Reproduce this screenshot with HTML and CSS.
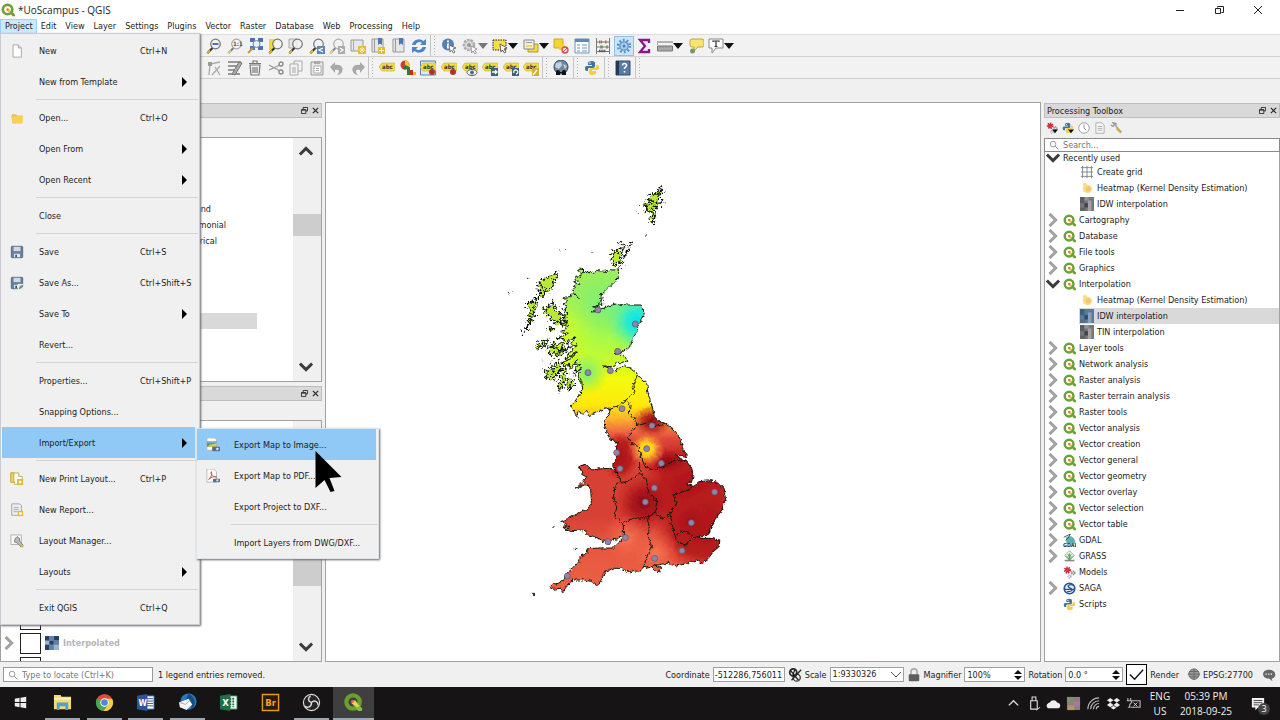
FILE: index.html
```html
<!DOCTYPE html>
<html lang="en">
<head>
<meta charset="utf-8">
<title>*UoScampus - QGIS</title>
<link rel="stylesheet" href="styles.css">
</head>
<body>
<svg class="sprite" aria-hidden="true">
  <symbol id="q" viewBox="0 0 16 16"><circle cx="7.5" cy="7.5" r="5.4" fill="#fff" stroke="#6f9f3a" stroke-width="3"/><path d="M9 9h3l4 4v2h-3z" fill="#6f9f3a"/><path d="M6.200 6.200h3l2 3-2 2-3-3z" fill="#e8c54a"/><circle cx="7.500" cy="7.500" r="1.200" fill="#d8663c"/></symbol>
  <symbol id="page" viewBox="0 0 16 16"><path d="M3.500 1h6l3.500 3.500V15h-9.500z" fill="#fff" stroke="#a0a0a0"/><path d="M9.500 1v3.500H13" fill="#ddd" stroke="#a0a0a0"/></symbol>
  <symbol id="folder" viewBox="0 0 16 16"><path d="M2 4h5l1 1.500h6V14H3z" fill="#d9aa33"/><path d="M1 6l2-1h12l-1 9H3z" fill="#f6d154"/></symbol>
  <symbol id="save" viewBox="0 0 16 16"><rect x="1.500" y="1.500" width="13" height="13" rx="1" fill="#667f9f" stroke="#4f6582"/><path d="M4 2h8v5H4z" fill="#cfd8e3"/><path d="M4.500 10h7v4h-7z" fill="#e6e6e6"/><path d="M6 11h2v3H6z" fill="#3e5470"/></symbol>
  <symbol id="saveas" viewBox="0 0 16 16"><use href="#save"/><path d="M9 9h7v7H9z" fill="#e9ede6"/><path d="M10 15l1-3 3-2 1.500 1.500L13 14z" fill="#6b9273"/></symbol>
  <symbol id="layout" viewBox="0 0 16 16"><path d="M1 1h9v4h4v9H5V11H1z" fill="#fff" stroke="#c9a83e"/><path d="M1 1h3.500v11H1z" fill="#edd266" stroke="#c9a83e"/><path d="M8 8h7v7H8z" fill="#ddb93c"/><path d="M10 10h3v3h-3z" fill="#fffbe0"/></symbol>
  <symbol id="report" viewBox="0 0 16 16"><path d="M2 1h9l2 2v11H2z" fill="#f2f2f2" stroke="#999"/><path d="M4 5h6M4 7.500h6M4 10h5" stroke="#8aa0b8"/><path d="M9 9h6v6H9z" fill="#ddb93c"/><path d="M10.500 10.500h3v3h-3z" fill="#fffbe0"/></symbol>
  <symbol id="manager" viewBox="0 0 16 16"><path d="M1 1h12v11H1z" fill="#fafafa" stroke="#aaa"/><path d="M6 5l2-2 3 2v3l4 5-2 2-5-5-3-1z" fill="#b9b9b9" stroke="#777"/><path d="M12 12l3 3" stroke="#d5b845" stroke-width="2"/></symbol>
  <symbol id="img" viewBox="0 0 16 16"><path d="M1 0h9l2 2v12H1z" fill="#fff" stroke="#b5b5b5"/><path d="M1 4h11v6H1z" fill="#5c9660"/><path d="M1 4h11v2H1z" fill="#77add0"/><path d="M3 8l9-2v4H3z" fill="#d8c864"/><rect x="7" y="10" width="9" height="5" rx="1" fill="#536f8f"/><circle cx="13" cy="12.500" r="1.500" fill="#d7e3ef"/></symbol>
  <symbol id="pdf" viewBox="0 0 16 16"><path d="M1 0h8l3 3v12H1z" fill="#fff" stroke="#b5b5b5"/><path d="M3 12c4-4 4-7 3-9-2 3 4 7 6 6-3-1-7 1-9 3z" fill="none" stroke="#c94036"/><rect x="8" y="11" width="8" height="4" rx="1" fill="#536f8f"/><circle cx="13" cy="13" r="1.300" fill="#d7e3ef"/></symbol>
  <symbol id="lens" viewBox="0 0 16 16"><path d="M1.500 15l5-5" stroke="#333" stroke-width="2.200"/><path d="M1 15.500l3-3" stroke="#d9ac3a" stroke-width="2.200"/><circle cx="9.500" cy="6" r="4.800" fill="#f3f3f3" fill-opacity=".8" stroke="#777" stroke-width="1.200"/></symbol>
  <symbol id="zout" viewBox="0 0 16 16"><use href="#lens"/><path d="M6.500 6h6" stroke="#4674b5" stroke-width="2"/></symbol>
  <symbol id="znat" viewBox="0 0 16 16"><g opacity=".6"><use href="#lens"/></g><text x="6" y="8.300" font-size="6" font-weight="bold" fill="#555">1:1</text></symbol>
  <symbol id="zfull" viewBox="0 0 16 16"><path d="M3 0h5v4H3zM11 0h5v4h-5zM11 8h5v4h-5zM3 8h5v4H3z" fill="#4c72ae"/><circle cx="9.500" cy="6" r="3.500" fill="#e8eef6" stroke="#7088a8"/><path d="M1 15l5-5" stroke="#c79b30" stroke-width="2"/></symbol>
  <symbol id="zsel" viewBox="0 0 16 16"><path d="M1 1h6v11H1z" fill="#f4d83b"/><use href="#lens"/></symbol>
  <symbol id="zlay" viewBox="0 0 16 16"><path d="M1 1h8v9H1z" fill="#e5e5e5" stroke="#aaa"/><use href="#lens"/></symbol>
  <symbol id="zlast" viewBox="0 0 16 16"><use href="#lens"/><path d="M8 8h8v8H8z" fill="#5d86b7"/><path d="M14 10l-4 2 4 2" fill="none" stroke="#fff" stroke-width="1.300"/></symbol>
  <symbol id="znext" viewBox="0 0 16 16"><g opacity=".55"><use href="#lens"/></g><path d="M9 8h7v8H9z" fill="#aaa"/><path d="M11 10l3 2-3 2" fill="none" stroke="#fff" stroke-width="1.300"/></symbol>
  <symbol id="mapnew" viewBox="0 0 16 16"><path d="M1 2h12v11H1z" fill="#e7e7e7" stroke="#999"/><path d="M3.500 2v11" stroke="#aaa"/><path d="M8 8h8v8H8z" fill="#dfbc3b"/><path d="M12 9v6M9 12h6M10 10l4 4M14 10l-4 4" stroke="#fff7c4" stroke-width=".9"/></symbol>
  <symbol id="bm" viewBox="0 0 16 16"><path d="M2 1h11v13H2z" fill="#e7e7e7" stroke="#999"/><path d="M4.500 1v13" stroke="#999"/><path d="M8 0h4v7L10 5.500 8 7z" fill="#4c77b2"/></symbol>
  <symbol id="bmnew" viewBox="0 0 16 16"><use href="#bm"/><path d="M8 9h7v7H8z" fill="#dfbc3b"/><path d="M11.500 10v5M9 12.500h5" stroke="#fff7c4"/></symbol>
  <symbol id="refresh" viewBox="0 0 16 16"><path d="M1 7a7 7 0 0 1 11.500-4L15 1v6H9l2-2a4 4 0 0 0-6.500 2zM15 9a7 7 0 0 1-11.500 4L1 15V9h6l-2 2a4 4 0 0 0 6.500-2z" fill="#4d86c6"/></symbol>
  <symbol id="info" viewBox="0 0 16 16"><circle cx="7" cy="6.500" r="6" fill="#5581b6"/><path d="M7 5.500v5M7 2.500v1.700" stroke="#fff" stroke-width="2"/><path d="M8 7l7 3-3 1 2 3-1.500 1-2-3-1.500 2z" fill="#fff" stroke="#555" stroke-width=".8"/></symbol>
  <symbol id="action" viewBox="0 0 16 16"><circle cx="7" cy="7" r="5" fill="#ddd" stroke="#aaa" stroke-width="2.500" stroke-dasharray="2.500 1"/><circle cx="7" cy="7" r="2" fill="#999"/><path d="M9 8l6 3-2.500 1 2 3-1.500 1-2-3-1.500 2z" fill="#fff" stroke="#888" stroke-width=".8"/></symbol>
  <symbol id="select" viewBox="0 0 16 16"><path d="M1 2h13v10H1z" fill="#f4dc4b" stroke="#222" stroke-dasharray="1.500 1"/><path d="M8 6l7 4-3 1 2 3-1.500 1-2-3-1.500 2z" fill="#fff" stroke="#444" stroke-width=".8"/></symbol>
  <symbol id="selform" viewBox="0 0 16 16"><path d="M5 6h10v8H5z" fill="#f3d847" stroke="#b59930"/><path d="M1 2h10v9H1z" fill="#eee" stroke="#888"/><path d="M3 4.500h6" stroke="#999"/><path d="M3 7h6v2H3z" fill="#f3d847"/></symbol>
  <symbol id="desel" viewBox="0 0 16 16"><path d="M1 1h9v9H1z" fill="#f3d530" stroke="#caaa28"/><path d="M6 7h6v5H6z" fill="#f3d530"/><circle cx="12" cy="12" r="3" fill="#fbdede" stroke="#d14c48" stroke-width="1.300"/><path d="M10 14l4-4" stroke="#d14c48"/></symbol>
  <symbol id="attr" viewBox="0 0 16 16"><path d="M1 1h14v14H1z" fill="#fafcff" stroke="#6f91bb"/><path d="M1 2.500h14" stroke="#5f87b8" stroke-width="3"/><path d="M3 7h3M8 7h5M3 10h3M8 10h5M3 13h3M8 13h5" stroke="#7294ba"/></symbol>
  <symbol id="abacus" viewBox="0 0 16 16"><path d="M1.500 0v16M14.500 0v16M1 4h14M1 9h14M1 13.500h14" stroke="#777" fill="none"/><path d="M4 4h3M10 4h2" stroke="#d45b4e" stroke-width="3.200" stroke-dasharray="1.400 .5"/><path d="M5 9h3M11 9h2" stroke="#6f9b6c" stroke-width="3.200"/><path d="M4 13h7" stroke="#555" stroke-width="2.600" stroke-dasharray="1.500 .7"/></symbol>
  <symbol id="gear" viewBox="0 0 16 16"><circle cx="8" cy="8" r="6" fill="none" stroke="#5c90c6" stroke-width="2.500" stroke-dasharray="1.800 1.970"/><circle cx="8" cy="8" r="4.200" fill="#a8cdf0" stroke="#5c90c6" stroke-width="1.300"/><circle cx="8" cy="8" r="1.500" fill="#4b82bd"/></symbol>
  <symbol id="sigma" viewBox="0 0 16 16"><path d="M13 5V2H4l5 6-5 6h9v-3" fill="none" stroke="#8b168b" stroke-width="2.300"/></symbol>
  <symbol id="ruler" viewBox="0 0 16 16"><path d="M0 4h16M0 5v2" stroke="#777" stroke-width="1.200"/><path d="M.500 8h15v5H.500z" fill="#aaa" stroke="#777"/><path d="M3 8v2M6 8v2M9 8v2M12 8v2" stroke="#888"/></symbol>
  <symbol id="tip" viewBox="0 0 16 16"><path d="M4 1h10q2 0 2 2v4q0 2-2 2h-4l-4 4V9H4Q2 9 2 7V3q0-2 2-2z" fill="#f5e373" stroke="#c1a638"/><circle cx="4.500" cy="13" r="2.500" fill="#789767"/></symbol>
  <symbol id="textann" viewBox="0 0 16 16"><path d="M1 1h14v9H8l-4 5v-5H1z" fill="#fbfbfb" stroke="#888"/><path d="M5 4V3h6v1M8 3v5.500M6.500 8.500h3" stroke="#333" stroke-width="1.200" fill="none"/></symbol>
  <symbol id="vertex" viewBox="0 0 16 16"><path d="M3 15L4 4l10-2M6 15L14 6M9 7l5 8" stroke="#aaa" stroke-width="1.300" fill="none"/><path d="M2 2h4v4H2z" fill="#999"/></symbol>
  <symbol id="multied" viewBox="0 0 16 16"><path d="M1 2h13M1 6h11M1 10h9M1 14h12" stroke="#999" stroke-width="2"/><path d="M5 14L12 2l3 1-7 12z" fill="#aaa" stroke="#777"/></symbol>
  <symbol id="trash" viewBox="0 0 16 16"><path d="M3 5h10l-1 10H4zM2 3.500h12M6 3V1h4v2M6 7v6M8 7v6M10 7v6" fill="none" stroke="#777" stroke-width="1.200"/></symbol>
  <symbol id="cut" viewBox="0 0 16 16"><path d="M1 5l11 6M1 10l11-5" stroke="#999" stroke-width="1.300"/><circle cx="13" cy="4" r="2" fill="none" stroke="#888" stroke-width="1.300"/><circle cx="13" cy="12" r="2" fill="none" stroke="#888" stroke-width="1.300"/></symbol>
  <symbol id="copy" viewBox="0 0 16 16"><path d="M6 1h8v10H6z" fill="#f2f2f2" stroke="#aaa"/><path d="M2 4h8v11H2z" fill="#f2f2f2" stroke="#aaa"/><path d="M4 8h4M4 10h4M4 12h4" stroke="#aaa"/></symbol>
  <symbol id="paste" viewBox="0 0 16 16"><path d="M2 2h12v13H2z" fill="#e8e8e8" stroke="#999"/><path d="M5 1h6v3H5z" fill="#aaa"/><path d="M5 6h7v7H5z" fill="#fff" stroke="#aaa"/><path d="M7 8.500h3M7 10.500h3" stroke="#aaa"/></symbol>
  <symbol id="undo" viewBox="0 0 16 16"><path d="M1 7l5-5v3c6-1 9 3 7 7-1 2-3 3-5 3 3-3 3-6-2-5v3z" fill="#a9a9a9"/></symbol>
  <symbol id="redo" viewBox="0 0 16 16"><path d="M15 7l-5-5v3C4 4 1 8 3 12c1 2 3 3 5 3-3-3-3-6 2-5v3z" fill="#a9a9a9"/></symbol>
  <symbol id="tag" viewBox="0 0 16 16"><path d="M0 7l3-4h12q1 0 1 1v6q0 1-1 1H3z" fill="#f0dc46" stroke="#c5ae38" stroke-width=".6"/><text x="3" y="9" font-size="6" font-weight="bold" fill="#333">abc</text></symbol>
  <symbol id="diagram" viewBox="0 0 16 16"><circle cx="5" cy="5" r="4.500" fill="#d13a31"/><path d="M5 5V.500A4.500 4.500 0 0 1 9 7z" fill="#f0c63a"/><path d="M5 5l4 2a4.500 4.500 0 0 1-6 2z" fill="#2f7b38"/><path d="M7 7h3v8H7z" fill="#238138"/><path d="M10 10h3v5h-3z" fill="#c62828"/><path d="M13 12h3v3h-3z" fill="#e4bb30"/></symbol>
  <symbol id="tagpin" viewBox="0 0 16 16"><use href="#tag"/><circle cx="12" cy="12" r="3" fill="#ba2d2d"/></symbol>
  <symbol id="taghi" viewBox="0 0 16 16"><path d="M.500 1h15v14H.500z" fill="#dcebf8" stroke="#4e82b9"/><use href="#tagpin"/></symbol>
  <symbol id="tageye" viewBox="0 0 16 16"><use href="#tag"/><ellipse cx="10" cy="12.500" rx="5" ry="3" fill="#fff" stroke="#555"/><circle cx="10" cy="12.500" r="2" fill="#426b9b"/></symbol>
  <symbol id="tagmove" viewBox="0 0 16 16"><use href="#tag"/><path d="M9 8h7v8H9z" fill="#3f6079"/><path d="M10 12h5M13 10l2 2-2 2" stroke="#fff" fill="none" stroke-width="1.300"/></symbol>
  <symbol id="tagrot" viewBox="0 0 16 16"><use href="#tag"/><path d="M9 8h7v8H9z" fill="#3f6079"/><path d="M11 13a2 2 0 1 1 2 1" stroke="#fff" fill="none" stroke-width="1.300"/></symbol>
  <symbol id="taged" viewBox="0 0 16 16"><use href="#tag"/><path d="M9 8h7v8H9z" fill="#d3ae32"/><path d="M10 15l4-5" stroke="#fff" stroke-width="1.500"/></symbol>
  <symbol id="globe" viewBox="0 0 16 16"><circle cx="8" cy="7" r="7" fill="#6e8aa5" stroke="#34495e"/><path d="M3 3l5-1 1 3-3 4-4-2zM10 4l4 2-2 3z" fill="#c5d2dc"/><path d="M3 15V12q0-2 2-2t2 2h2q0-2 2-2t2 2v3h-4v-2H7v2z" fill="#111"/></symbol>
  <symbol id="python" viewBox="0 0 16 16"><path d="M8 1c-3 0-4 1-4 2v2h4v1H3C1 6 1 7 1 8.500S1.500 11 3 11h1V9q0-1 1-1h4q2 0 2-2V3c0-1-1-2-3-2z" fill="#3f73a4"/><path d="M8 15c3 0 4-1 4-2v-2H8v-1h5c2 0 2-1 2-2.500S14.500 5 13 5h-1v2q0 1-1 1H7q-2 0-2 2v3c0 1 1 2 3 2z" fill="#f3cd45"/><circle cx="6" cy="3" r=".8" fill="#fff"/></symbol>
  <symbol id="help" viewBox="0 0 16 16"><path d="M1 1h14v14H1z" fill="#587ba5" stroke="#344e70"/><path d="M1 1h3v14H1z" fill="#263950"/><path d="M7.500 5.500q0-2 2-2t2 2q0 1-2 2.500v1M9.500 11v1.500" fill="none" stroke="#fff" stroke-width="1.500"/></symbol>
  <symbol id="cogs" viewBox="0 0 16 16"><circle cx="5.500" cy="5" r="3" fill="#d43c45" stroke="#c52837" stroke-width="3" stroke-dasharray="1.500 1"/><circle cx="12.500" cy="8.500" r="2" fill="#ddd" stroke="#8b8585" stroke-width="2" stroke-dasharray="1.300 .7"/><circle cx="8" cy="13" r="1.700" fill="#fff" stroke="#a6addd" stroke-width="2" stroke-dasharray="1.300 .7"/></symbol>
  <symbol id="drop" viewBox="0 0 16 16"><path d="M8 10h8l-4 5z" fill="#111"/></symbol>
  <symbol id="clock" viewBox="0 0 16 16"><circle cx="8" cy="8" r="7" fill="#fff" stroke="#888"/><path d="M8 3v5l3 3" fill="none" stroke="#777"/></symbol>
  <symbol id="doc" viewBox="0 0 16 16"><path d="M2.500 1h8l3 3v11h-11z" fill="#f7f7f7" stroke="#999"/><path d="M5 6h6M5 8.500h6M5 11h6" stroke="#999"/></symbol>
  <symbol id="wrench" viewBox="0 0 16 16"><path d="M1 4l3 2 2-2-2-3 4 1v4l3 3" fill="none" stroke="#999" stroke-width="1.800"/><path d="M9 8l6 6" stroke="#c8ab58" stroke-width="3.500"/></symbol>
  <symbol id="search" viewBox="0 0 16 16"><circle cx="6.500" cy="6.500" r="4.500" fill="none" stroke="#888" stroke-width="1.300"/><path d="M10 10l5 5" stroke="#888" stroke-width="1.500"/></symbol>
  <symbol id="grid" viewBox="0 0 16 16"><path d="M3 1v14M8 1v14M13 1v14M1 3h14M1 8h14M1 13h14" stroke="#71808c" stroke-width="1"/></symbol>
  <symbol id="heat" viewBox="0 0 16 16"><path d="M3 3l3-1 2 2 4 1 2 4-2 4-4 1-4-2-1-4 1-2z" fill="#f7dd88"/><circle cx="9.500" cy="9" r="3" fill="#f4c971"/></symbol>
  <symbol id="idw" viewBox="0 0 16 16"><path d="M0 0h16v16H0z" fill="#77777a"/><path d="M0 0h5v7H0z" fill="#5c5d60"/><path d="M5 0h5v4H5z" fill="#939393"/><path d="M9 4h4v12H9z" fill="#a3a3a3"/><path d="M5 7h4v5H5z" fill="#3f4246"/><path d="M0 12h6v4H0z" fill="#636367"/></symbol>
  <symbol id="idwb" viewBox="0 0 16 16"><path d="M0 0h16v16H0z" fill="#5c7b99"/><path d="M0 0h5v7H0z" fill="#3f5f7e"/><path d="M9 4h4v12H9z" fill="#8ba3b8"/><path d="M5 7h4v5H5z" fill="#2f4b66"/><path d="M0 12h6v4H0z" fill="#50708e"/></symbol>
  <symbol id="gdal" viewBox="0 0 16 16"><path d="M4 4q8-4 11 5v3H4z" fill="#5bb0b1"/><path d="M1 4l8-4-2 4-4 4" fill="none" stroke="#333"/><text x="0" y="15.500" font-size="6.500" font-weight="bold" fill="#14313b">GDAL</text></symbol>
  <symbol id="grass" viewBox="0 0 16 16"><path d="M8 1l6 6-6 6-6-6z" fill="#eef6ec" stroke="#88a58a"/><path d="M8 12V4M8 12L4 7M8 12l4-5M8 10L6 5M8 10l2-5" stroke="#4d9152" fill="none"/><path d="M2 13h12" stroke="#888" stroke-width="2"/></symbol>
  <symbol id="saga" viewBox="0 0 16 16"><circle cx="8" cy="8" r="6.500" fill="#e8f0f8" stroke="#23578f" stroke-width="2"/><path d="M13 4c-5-2-9 1-5 3s6 4-3 5M2 9h12" fill="none" stroke="#23578f" stroke-width="1.600"/></symbol>
  <symbol id="raster" viewBox="0 0 16 16"><path d="M0 0h16v16H0z" fill="#9cb2cd"/><path d="M0 0h5v5H0zM10 0h6v5h-6zM5 5h5v5H5zM0 10h5v6H0z" fill="#28405e"/><path d="M5 0h5v5H5zM10 5h6v5h-6zM5 10h5v6H5z" fill="#5e80a9"/></symbol>
  <symbol id="chev" viewBox="0 0 16 16"><path d="M4 1l7 7-7 7" fill="none" stroke="#a2a2a2" stroke-width="3.500"/></symbol>
  <symbol id="chevd" viewBox="0 0 16 16"><path d="M1 4l7 7 7-7" fill="none" stroke="#3c3c3c" stroke-width="3.500"/></symbol>
  <symbol id="float" viewBox="0 0 8 8"><path d="M2.500 2.500v-2h5v4h-2M.500 3h5v4.500h-5zM.500 3.500h5" fill="none" stroke="#222"/></symbol>
  <symbol id="x" viewBox="0 0 8 8"><path d="M1 1l6 6M7 1L1 7" stroke="#222" stroke-width="1.300"/></symbol>
</svg>

<header class="titlebar">
  <svg><use href="#q"/></svg><h1>*UoScampus - QGIS</h1>
  <div class="winbtns">
    <button aria-label="Minimize"><svg viewBox="0 0 10 10"><path d="M1 5.500h8" stroke="#222"/></svg></button>
    <button aria-label="Restore"><svg viewBox="0 0 10 10"><path d="M3.500 2.500v-1h6v6h-2M1.500 3.500h5v5h-5z" fill="none" stroke="#222"/></svg></button>
    <button aria-label="Close"><svg viewBox="0 0 10 10"><path d="M1 1l8 8M9 1L1 9" stroke="#222"/></svg></button>
  </div>
</header>

<nav class="menubar">
  <button class="open">Project</button><button>Edit</button><button>View</button><button>Layer</button><button>Settings</button><button>Plugins</button><button>Vector</button><button>Raster</button><button>Database</button><button>Web</button><button>Processing</button><button>Help</button>
  <ul class="menu project">
    <li><svg><use href="#page"/></svg><span>New</span><kbd>Ctrl+N</kbd></li>
    <li class="more"><span>New from Template</span></li>
    <li class="sep"></li>
    <li><svg><use href="#folder"/></svg><span>Open...</span><kbd>Ctrl+O</kbd></li>
    <li class="more"><span>Open From</span></li>
    <li class="more"><span>Open Recent</span></li>
    <li class="sep"></li>
    <li><span>Close</span></li>
    <li class="sep"></li>
    <li><svg><use href="#save"/></svg><span>Save</span><kbd>Ctrl+S</kbd></li>
    <li><svg><use href="#saveas"/></svg><span>Save As...</span><kbd>Ctrl+Shift+S</kbd></li>
    <li class="more"><span>Save To</span></li>
    <li><span>Revert...</span></li>
    <li class="sep"></li>
    <li><span>Properties...</span><kbd>Ctrl+Shift+P</kbd></li>
    <li><span>Snapping Options...</span></li>
    <li class="more hot"><span>Import/Export</span>
      <ul class="menu sub">
        <li class="hot"><svg><use href="#img"/></svg><span>Export Map to Image...</span></li>
        <li><svg><use href="#pdf"/></svg><span>Export Map to PDF...</span></li>
        <li><span>Export Project to DXF...</span></li>
        <li class="sep"></li>
        <li><span>Import Layers from DWG/DXF...</span></li>
      </ul>
    </li>
    <li class="sep"></li>
    <li><svg><use href="#layout"/></svg><span>New Print Layout...</span><kbd>Ctrl+P</kbd></li>
    <li><svg><use href="#report"/></svg><span>New Report...</span></li>
    <li><svg><use href="#manager"/></svg><span>Layout Manager...</span></li>
    <li class="more"><span>Layouts</span></li>
    <li class="sep"></li>
    <li><span>Exit QGIS</span><kbd>Ctrl+Q</kbd></li>
  </ul>
</nav>

<div class="toolbars">
  <div class="toolbar">
    <div class="tools nav"><button aria-label="Zoom out"><svg><use href="#zout"/></svg></button><button aria-label="Zoom native"><svg><use href="#znat"/></svg></button><button aria-label="Zoom full"><svg><use href="#zfull"/></svg></button><button aria-label="Zoom to selection"><svg><use href="#zsel"/></svg></button><button aria-label="Zoom to layer"><svg><use href="#zlay"/></svg></button><button aria-label="Zoom last"><svg><use href="#zlast"/></svg></button><button aria-label="Zoom next"><svg><use href="#znext"/></svg></button><button aria-label="New map view"><svg><use href="#mapnew"/></svg></button><button aria-label="New bookmark"><svg><use href="#bmnew"/></svg></button><button aria-label="Bookmarks"><svg><use href="#bm"/></svg></button><button aria-label="Refresh"><svg><use href="#refresh"/></svg></button></div>
    <div class="tools attrs"><button aria-label="Identify"><svg><use href="#info"/></svg></button><button aria-label="Action" class="dd dim"><svg><use href="#action"/></svg></button><button aria-label="Select" class="dd"><svg><use href="#select"/></svg></button><button aria-label="Select by value" class="dd"><svg><use href="#selform"/></svg></button><button aria-label="Deselect"><svg><use href="#desel"/></svg></button><button aria-label="Attribute table"><svg><use href="#attr"/></svg></button><button aria-label="Field calculator"><svg><use href="#abacus"/></svg></button><button aria-label="Toolbox" class="on"><svg><use href="#gear"/></svg></button><button aria-label="Statistics"><svg><use href="#sigma"/></svg></button><button aria-label="Measure" class="dd"><svg><use href="#ruler"/></svg></button><button aria-label="Map tips"><svg><use href="#tip"/></svg></button><button aria-label="Text annotation" class="dd"><svg><use href="#textann"/></svg></button></div>
  </div>
  <div class="toolbar">
    <div class="tools edit"><button aria-label="Vertex tool"><svg><use href="#vertex"/></svg></button><button aria-label="Modify attributes"><svg><use href="#multied"/></svg></button><button aria-label="Delete"><svg><use href="#trash"/></svg></button><button aria-label="Cut"><svg><use href="#cut"/></svg></button><button aria-label="Copy"><svg><use href="#copy"/></svg></button><button aria-label="Paste"><svg><use href="#paste"/></svg></button><button aria-label="Undo"><svg><use href="#undo"/></svg></button><button aria-label="Redo"><svg><use href="#redo"/></svg></button></div>
    <div class="tools labels"><button aria-label="Labels"><svg><use href="#tag"/></svg></button><button aria-label="Diagrams"><svg><use href="#diagram"/></svg></button><button aria-label="Highlight pinned"><svg><use href="#taghi"/></svg></button><button aria-label="Pin labels"><svg><use href="#tagpin"/></svg></button><button aria-label="Show labels"><svg><use href="#tageye"/></svg></button><button aria-label="Move label"><svg><use href="#tagmove"/></svg></button><button aria-label="Rotate label"><svg><use href="#tagrot"/></svg></button><button aria-label="Change label"><svg><use href="#taged"/></svg></button></div>
    <div class="tools solo"><button aria-label="Metasearch"><svg><use href="#globe"/></svg></button></div>
    <div class="tools solo"><button aria-label="Python console"><svg><use href="#python"/></svg></button></div>
    <div class="tools solo"><button aria-label="Help contents"><svg><use href="#help"/></svg></button></div>
    <div class="tools solo"></div>
  </div>
</div>

<main class="work">
  <aside class="left">
    <section class="dock browser">
      <div class="dockhead"><button aria-label="Float"><svg><use href="#float"/></svg></button><button aria-label="Close"><svg><use href="#x"/></svg></button></div>
      <div class="dockbody">
        <ul class="files"><li>England</li><li>Ceremonial</li><li>Historical</li><li></li><li></li><li></li><li></li><li class="picked"></li></ul>
        <div class="scroll"><svg class="up"><use href="#chevd"/></svg><i></i><svg><use href="#chevd"/></svg></div>
      </div>
    </section>
    <section class="dock layers">
      <div class="dockhead"><button aria-label="Float"><svg><use href="#float"/></svg></button><button aria-label="Close"><svg><use href="#x"/></svg></button></div>
      <div class="dockbody">
        <ul class="legend"><li><input type="checkbox" aria-label="Layer"></li><li><svg><use href="#chev"/></svg><input type="checkbox" id="lay"><svg><use href="#raster"/></svg><label for="lay">Interpolated</label></li><li><input type="checkbox" aria-label="Layer"></li></ul>
        <div class="scroll"><svg class="up"><use href="#chevd"/></svg><i></i><svg><use href="#chevd"/></svg></div>
      </div>
    </section>
  </aside>

  <section class="canvas">
    <svg viewBox="326 103 714 558" role="img" aria-label="Interpolated map of Great Britain">
      <defs>
        <linearGradient id="base" gradientUnits="userSpaceOnUse" x1="0" y1="290" x2="0" y2="1280">
          <stop offset="0" stop-color="#a0ee55"/><stop offset=".13" stop-color="#8ef066"/><stop offset=".22" stop-color="#a8fb48"/><stop offset=".29" stop-color="#cbfb2a"/><stop offset=".34" stop-color="#f4fb08"/><stop offset=".42" stop-color="#ffe808"/><stop offset=".46" stop-color="#fcb52c"/><stop offset=".5" stop-color="#ee6841"/><stop offset=".53" stop-color="#d94034"/><stop offset=".75" stop-color="#d64034"/><stop offset=".86" stop-color="#e75841"/><stop offset="1" stop-color="#ee6045"/>
        </linearGradient>
        <radialGradient id="cy"><stop offset="0" stop-color="#00e2f2"/><stop offset=".35" stop-color="#1eeadc" stop-opacity=".9"/><stop offset="1" stop-color="#70ee90" stop-opacity="0"/></radialGradient>
        <radialGradient id="gr"><stop offset="0" stop-color="#72ee84"/><stop offset="1" stop-color="#8cf060" stop-opacity="0"/></radialGradient>
        <radialGradient id="yl"><stop offset="0" stop-color="#d4fb20"/><stop offset="1" stop-color="#d4fb20" stop-opacity="0"/></radialGradient>
        <radialGradient id="ye"><stop offset="0" stop-color="#fff200"/><stop offset=".35" stop-color="#ffc822"/><stop offset=".65" stop-color="#ee7439" stop-opacity=".8"/><stop offset="1" stop-color="#e05038" stop-opacity="0"/></radialGradient>
        <radialGradient id="rd"><stop offset="0" stop-color="#8c0a16"/><stop offset=".4" stop-color="#a81219" stop-opacity=".85"/><stop offset="1" stop-color="#c82420" stop-opacity="0"/></radialGradient>
        <radialGradient id="rd2"><stop offset="0" stop-color="#ac1218"/><stop offset=".6" stop-color="#b41a1b" stop-opacity=".9"/><stop offset="1" stop-color="#c82420" stop-opacity="0"/></radialGradient>
        <radialGradient id="lt"><stop offset="0" stop-color="#fa7550"/><stop offset="1" stop-color="#ea5d43" stop-opacity="0"/></radialGradient>
        <filter id="rough" x="-5%" y="-5%" width="110%" height="110%"><feTurbulence type="fractalNoise" baseFrequency=".09" numOctaves="2" seed="4"/><feDisplacementMap in="SourceGraphic" scale="14" xChannelSelector="R" yChannelSelector="G"/></filter>
        <filter id="ragged" x="-5%" y="-5%" width="110%" height="110%"><feTurbulence type="fractalNoise" baseFrequency=".12" numOctaves="2" seed="9"/><feDisplacementMap in="SourceGraphic" scale="34" xChannelSelector="R" yChannelSelector="G"/></filter>
        <path id="gb" d="M237 298L247 297 250 306 258 303 262 312 268 304 278 308 290 302 305 303 318 304 330 299 345 300 355 296 355 310 357 320 347 332 335 345 320 360 306 372 298 382 310 386 302 393 308 402 296 402 302 412 278 410 292 416 275 426 300 424 312 414 325 408 345 402 362 406 385 405 423 405 428 415 433 430 425 448 416 462 410 485 402 500 395 515 388 532 375 543 358 548 345 552 365 553 377 563 380 572 365 578 350 577 345 588 335 590 310 588 332 596 345 603 362 592 373 587 385 592 395 595 408 607 416 618 440 640 444 670 455 705 463 740 475 752 497 762 515 775 532 795 545 808 540 815 550 835 560 862 540 858 523 855 560 875 575 895 580 915 575 935 560 943 580 950 600 935 630 932 655 938 672 955 677 990 665 1020 650 1045 635 1065 628 1080 632 1085 615 1096 585 1102 605 1105 630 1105 660 1110 657 1130 640 1145 625 1165 605 1180 590 1170 560 1180 530 1188 500 1180 475 1185 435 1195 432 1188 420 1205 400 1202 385 1208 365 1195 340 1195 318 1203 310 1215 300 1240 290 1247 275 1235 255 1230 220 1230 210 1238 198 1252 185 1270 180 1255 160 1258 148 1252 158 1243 175 1240 190 1230 200 1210 225 1190 240 1170 240 1158 260 1152 265 1136 300 1134 340 1134 355 1120 374 1102 360 1102 340 1110 322 1122 305 1110 285 1100 265 1095 255 1085 240 1080 210 1083 195 1080 208 1072 188 1070 200 1065 182 1055 205 1045 235 1030 265 1015 275 995 272 960 265 945 250 945 228 955 240 943 250 935 260 920 245 910 240 888 255 883 265 890 272 900 300 897 328 895 345 898 338 885 350 870 348 850 352 815 335 813 322 790 313 765 315 745 328 730 332 714 305 720 285 730 265 737 260 723 250 733 235 723 230 743 223 725 212 710 220 700 235 680 248 655 245 635 235 620 244 594 225 612 228 592 243 580 222 585 232 568 215 590 205 600 210 580 190 592 190 575 215 565 230 545 195 570 210 548 230 520 195 545 215 525 225 500 190 520 180 540 165 530 195 510 170 505 205 490 185 485 205 470 182 462 207 458 190 450 200 440 185 435 205 430 192 418 203 410 188 400 200 395 190 382 210 380 220 370 235 385 218 362 228 345 220 335 240 345 228 328 235 318 240 310 233 305Z"/>
        <path id="isles" d="M170 308L172 322 160 338 158 350 140 365 128 375 115 385 122 365 112 355 118 345 125 330 145 320 160 312ZM115 380L108 395 104 410 100 430 97 450 85 465 70 492 78 470 88 455 90 430 85 405 100 395ZM155 395L165 410 170 425 188 435 180 450 190 462 170 460 150 450 160 440 140 435 132 420 150 410ZM145 535L165 520 185 530 200 545 175 558 150 550ZM135 603L155 600 165 610 155 630 140 625ZM158 590L178 575 180 600 165 618ZM205 625L215 625 222 640 215 655 205 655 202 640ZM182 600L198 596 194 635 178 660 172 655 182 630ZM340 245L355 238 365 258 358 280 345 285 336 270ZM480 50L486 60 482 78 472 82 472 95 488 98 468 105 465 130 460 160 453 150 456 125 435 120 440 110 430 103 445 100 450 85 455 72 470 72ZM106 528L125 518 142 512 130 526 110 534ZM145 475L153 470 158 477 150 483Z"/>
        <clipPath id="land"><use href="#gb"/></clipPath>
      </defs>
      <g transform="translate(500 170) scale(.333333)">
        <g filter="url(#ragged)" stroke="#10180c" stroke-width="4">
          <use href="#isles" fill="#b8e838"/>
          <path fill="none" d="M357 218l14 12 -8 6 20 4 -5 10 12 -20 6 -14M372 222l16 10 -12 18 -4 10M362 268l10 14M355 282l8 12M428 102l18 14M452 115l20 -8M205 388l20 -10M198 440l-14 -6M150 530l30 10 25-18M75 402l25 -6M82 450l16 -8M210 560l22-16M180 500l24 8M120 350l20 10M100 410l10 14M450 90l12 12M474 60l4 20M210 430l-22-18M215 460l-28-8M200 520l25-10M222 610l20 5M160 550l28-8M228 345l14 6M225 320l16 8M20 368l8 4"/>
        </g>
        <g filter="url(#rough)" stroke="#10180c" stroke-width="3">
          <g clip-path="url(#land)" stroke="none">
            <path d="M130 280h560v1010H130z" fill="url(#base)"/>
            <ellipse cx="185" cy="500" rx="110" ry="150" fill="url(#yl)"/><ellipse cx="330" cy="400" rx="120" ry="110" fill="url(#gr)" opacity=".8"/><circle cx="412" cy="455" r="95" fill="url(#cy)"/><circle cx="262" cy="610" r="65" fill="url(#gr)"/>
            <ellipse cx="455" cy="755" rx="60" ry="50" fill="url(#rd)"/><ellipse cx="360" cy="860" rx="55" ry="75" fill="url(#rd2)"/><ellipse cx="570" cy="960" rx="150" ry="150" fill="url(#rd2)"/><ellipse cx="610" cy="1080" rx="150" ry="130" fill="url(#rd2)"/>
            <ellipse cx="500" cy="875" rx="90" ry="50" fill="url(#rd)"/><circle cx="432" cy="998" r="95" fill="url(#rd)"/><circle cx="572" cy="1055" r="60" fill="url(#rd)" opacity=".6"/><circle cx="440" cy="836" r="58" fill="url(#ye)"/>
            <circle cx="380" cy="1105" r="75" fill="url(#lt)"/><circle cx="464" cy="1150" r="75" fill="url(#lt)"/>
          </g>
          <use href="#gb" fill="none"/>
          <path fill="#ea5d43" d="M455 1192L470 1185 485 1195 468 1208Z"/>
          <path fill="none" d="M332 714L360 705 378 690 405 665 398 648 412 615M378 690L390 705 388 730 405 750 407 767 440 760 465 770 497 762M407 767L385 800 395 820 415 830 425 865 435 890 460 900 500 885 530 868 560 875M418 875L420 910 400 925 365 940 345 898M360 935L345 950 340 980 350 1010 345 1040 370 1065 370 1100M420 910L435 925 445 965 470 995 465 1030M370 1060L400 1045 440 1043 465 1030 490 1045 510 1030 530 1000 520 975 565 960 580 945M440 1043L448 1070 445 1100 455 1130 440 1160 432 1188M510 1030L520 1080 525 1095 530 1115 560 1125 575 1102 605 1105M530 1095L550 1080 575 1095"/>
          <path fill="none" d="M310 402l-30 8M250 300l-10 22M195 237l3 1M177 239l2 1M413 129l3 1M438 197l3 2M84 325l4 0M125 571l3 0M277 246l2 2M150 580l6-8M98 1270l6 2 -4 6 4-8M104 1266l-4 8M224 1134l5 2M160 1070l6 2M635 1082l-10 4"/>
        </g>
        <g fill="#8f85aa" stroke="#5c526f" stroke-width="2">
          <circle cx="294" cy="420" r="9"/><circle cx="406" cy="462" r="9"/><circle cx="353" cy="544" r="9"/><circle cx="264" cy="608" r="9"/><circle cx="331" cy="602" r="9"/><circle cx="366" cy="716" r="9"/><circle cx="456" cy="767" r="9"/><circle cx="440" cy="836" r="9"/><circle cx="484" cy="880" r="9"/><circle cx="350" cy="848" r="9"/><circle cx="360" cy="896" r="9"/><circle cx="463" cy="954" r="9"/><circle cx="436" cy="996" r="9"/><circle cx="644" cy="966" r="9"/><circle cx="574" cy="1058" r="9"/><circle cx="546" cy="1142" r="9"/><circle cx="464" cy="1165" r="9"/><circle cx="376" cy="1103" r="9"/><circle cx="324" cy="1115" r="9"/><circle cx="202" cy="1218" r="9"/>
        </g>
      </g>
    </svg>
  </section>

  <aside class="right">
    <div class="dockhead"><h2>Processing Toolbox</h2><button aria-label="Float"><svg><use href="#float"/></svg></button><button aria-label="Close"><svg><use href="#x"/></svg></button></div>
    <div class="minibar"><button aria-label="Models"><svg><use href="#cogs"/><use href="#drop"/></svg></button><button aria-label="Scripts"><svg><use href="#python"/><use href="#drop"/></svg></button><button aria-label="History"><svg><use href="#clock"/></svg></button><button aria-label="Results"><svg><use href="#doc"/></svg></button><button aria-label="Options"><svg><use href="#wrench"/></svg></button></div>
    <div class="find"><svg><use href="#search"/></svg><input type="text" placeholder="Search..." aria-label="Search"></div>
    <ul class="tree">
      <li class="first"><svg><use href="#chevd"/></svg><span>Recently used</span></li>
      <li class="child"><svg><use href="#grid"/></svg><span>Create grid</span></li>
      <li class="child"><svg><use href="#heat"/></svg><span>Heatmap (Kernel Density Estimation)</span></li>
      <li class="child"><svg><use href="#idw"/></svg><span>IDW interpolation</span></li>
      <li><svg><use href="#chev"/></svg><svg><use href="#q"/></svg><span>Cartography</span></li>
      <li><svg><use href="#chev"/></svg><svg><use href="#q"/></svg><span>Database</span></li>
      <li><svg><use href="#chev"/></svg><svg><use href="#q"/></svg><span>File tools</span></li>
      <li><svg><use href="#chev"/></svg><svg><use href="#q"/></svg><span>Graphics</span></li>
      <li><svg><use href="#chevd"/></svg><svg><use href="#q"/></svg><span>Interpolation</span></li>
      <li class="child"><svg><use href="#heat"/></svg><span>Heatmap (Kernel Density Estimation)</span></li>
      <li class="child picked"><svg><use href="#idwb"/></svg><span>IDW interpolation</span></li>
      <li class="child"><svg><use href="#idw"/></svg><span>TIN interpolation</span></li>
      <li><svg><use href="#chev"/></svg><svg><use href="#q"/></svg><span>Layer tools</span></li>
      <li><svg><use href="#chev"/></svg><svg><use href="#q"/></svg><span>Network analysis</span></li>
      <li><svg><use href="#chev"/></svg><svg><use href="#q"/></svg><span>Raster analysis</span></li>
      <li><svg><use href="#chev"/></svg><svg><use href="#q"/></svg><span>Raster terrain analysis</span></li>
      <li><svg><use href="#chev"/></svg><svg><use href="#q"/></svg><span>Raster tools</span></li>
      <li><svg><use href="#chev"/></svg><svg><use href="#q"/></svg><span>Vector analysis</span></li>
      <li><svg><use href="#chev"/></svg><svg><use href="#q"/></svg><span>Vector creation</span></li>
      <li><svg><use href="#chev"/></svg><svg><use href="#q"/></svg><span>Vector general</span></li>
      <li><svg><use href="#chev"/></svg><svg><use href="#q"/></svg><span>Vector geometry</span></li>
      <li><svg><use href="#chev"/></svg><svg><use href="#q"/></svg><span>Vector overlay</span></li>
      <li><svg><use href="#chev"/></svg><svg><use href="#q"/></svg><span>Vector selection</span></li>
      <li><svg><use href="#chev"/></svg><svg><use href="#q"/></svg><span>Vector table</span></li>
      <li><svg><use href="#chev"/></svg><svg><use href="#gdal"/></svg><span>GDAL</span></li>
      <li><svg><use href="#chev"/></svg><svg><use href="#grass"/></svg><span>GRASS</span></li>
      <li><svg></svg><svg><use href="#cogs"/></svg><span>Models</span></li>
      <li><svg><use href="#chev"/></svg><svg><use href="#saga"/></svg><span>SAGA</span></li>
      <li><svg></svg><svg><use href="#python"/></svg><span>Scripts</span></li>
    </ul>
  </aside>
</main>

<footer class="status">
  <div class="locate"><svg><use href="#search"/></svg><input type="text" placeholder="Type to locate (Ctrl+K)" aria-label="Locate"></div>
  <span class="message">1 legend entries removed.</span>
  <label for="coord">Coordinate</label><input type="text" id="coord" value="-512286,756011">
  <svg viewBox="0 0 16 16"><circle cx="6" cy="5" r="4" fill="none" stroke="#222" stroke-width="2"/><circle cx="10" cy="11" r="4" fill="none" stroke="#333" stroke-width="1.500"/><path d="M3 3l9 11M8 1l-3 9M15 2L4 14" stroke="#222" stroke-width="1.500"/></svg>
  <label for="scale">Scale</label><select id="scale"><option>1:9330326</option></select>
  <svg viewBox="0 0 16 16"><path d="M4.500 8V4.500a3.500 3.500 0 0 1 7 0V8" fill="none" stroke="#aaa" stroke-width="1.800"/><rect x="2" y="7" width="12" height="8" rx="1" fill="#5e5e5e"/></svg>
  <label for="mag">Magnifier</label><div class="spin wide"><input type="text" id="mag" value="100%"><span class="steps"><button aria-label="Increase"></button><button aria-label="Decrease"></button></span></div>
  <label for="rot">Rotation</label><div class="spin"><input type="text" id="rot" value="0.0 °"><span class="steps"><button aria-label="Increase"></button><button aria-label="Decrease"></button></span></div>
  <input type="checkbox" id="render" checked><label for="render">Render</label>
  <button class="crs"><svg viewBox="0 0 16 16"><circle cx="8" cy="7" r="6" fill="#999" stroke="#666"/><path d="M1 7h14M8 1v12M3 4h10M3 10h10" stroke="#666"/></svg>EPSG:27700</button>
  <button aria-label="Messages" class="msgs"><svg viewBox="0 0 16 16"><path d="M8 2c9 0 9 10 3 10l1 3-4-3C-1 12-1 2 8 2z" fill="#666"/><path d="M4 7h8" stroke="#fff" stroke-width="1.500" stroke-dasharray="1.500 1.500"/></svg></button>
</footer>

<div class="taskbar">
  <button aria-label="Start"><svg viewBox="0 0 20 20"><path d="M4 6l5-1v4.500H4zM10 5l6-1v5.500h-6zM4 10.500h5V15l-5-1zM10 10.500h6V16l-6-1z" fill="#eee"/></svg></button>
  <button class="run" aria-label="File Explorer"><svg viewBox="0 0 20 20"><path d="M1 2h7l1 2h10v13H1z" fill="#f6d977"/><path d="M1 5h18v2H1z" fill="#fff0b6"/><path d="M4 10h12v8h-3v-4H7v4H4z" fill="#45a5d8"/></svg></button>
  <button class="run" aria-label="Chrome"><svg viewBox="0 0 20 20"><circle cx="10" cy="10" r="9" fill="#e04a3a"/><path d="M10 10L2.200 5.500A9 9 0 0 0 9 19l5-7z" fill="#46a852"/><path d="M10 6h8a9 9 0 0 1-9 13l5-7z" fill="#f5cf3f"/><circle cx="10" cy="10" r="4.500" fill="#fff"/><circle cx="10" cy="10" r="3.500" fill="#4a89dc"/></svg></button>
  <button class="run" aria-label="Word"><svg viewBox="0 0 20 20"><path d="M9 3h10v14H9z" fill="#fff" stroke="#2a5699"/><path d="M11 6h7M11 8.500h7M11 11h7M11 13.500h7" stroke="#2a5699"/><path d="M1 3l11-2v18L1 17z" fill="#2a5699"/><text x="2.500" y="13.500" font-size="9" font-weight="bold" fill="#fff">W</text></svg></button>
  <button class="run" aria-label="Thunderbird"><svg viewBox="0 0 20 20"><circle cx="11" cy="9" r="8.500" fill="#2d77bd"/><path d="M11 1c8 3 9 13 2 17 3-6 1-10-5-11z" fill="#174a82"/><path d="M1 10l10-4 4 6-6 6-7-3z" fill="#f4f4f4"/><path d="M2 10l6 2 5-5" fill="none" stroke="#aaa"/></svg></button>
  <button aria-label="Excel"><svg viewBox="0 0 20 20"><path d="M9 3h10v14H9z" fill="#fff" stroke="#1f7145"/><path d="M12 5v10M15 5v10" stroke="#1f7145" stroke-width="2" stroke-dasharray="2 1"/><path d="M1 3l11-2v18L1 17z" fill="#1f7145"/><text x="3.500" y="13.500" font-size="10" font-weight="bold" fill="#fff">X</text></svg></button>
  <button aria-label="Bridge"><svg viewBox="0 0 20 20"><path d="M1.500 1.500h17v17h-17z" fill="#2b1a04" stroke="#e09a22" stroke-width="1.500"/><text x="4.500" y="13.500" font-size="10" font-weight="bold" fill="#f0a52d">Br</text></svg></button>
  <button class="run" aria-label="OBS"><svg viewBox="0 0 20 20"><circle cx="10" cy="10" r="8.500" fill="#252525" stroke="#ddd" stroke-width="1.200"/><path d="M10 10c-4-1-4-5-1-7M10 10c3-3 7-1 7 3M10 10c0 5-4 6-7 4" fill="none" stroke="#ddd" stroke-width="1.500"/></svg></button>
  <button class="run active" aria-label="QGIS"><svg viewBox="0 0 20 20"><circle cx="9.500" cy="9.500" r="7" fill="none" stroke="#6aa02f" stroke-width="4.500"/><path d="M10 9l4 1 5 6v3h-4l-5-6z" fill="#86b93a"/><path d="M8 8h4l4 6-2 1-6-4z" fill="#f0cf5c"/><circle cx="9" cy="9" r="1.500" fill="#e9673e"/></svg></button>
  <div class="tray">
    <svg viewBox="0 0 16 16"><path d="M3 10l5-5 5 5" fill="none" stroke="#ddd" stroke-width="1.500"/></svg>
    <svg viewBox="0 0 16 16"><path d="M5 5h7v9H5zM6.500 5V1h4v4" fill="none" stroke="#ddd" stroke-width="1.200"/><path d="M11 15l4-3" stroke="#ddd"/></svg>
    <svg viewBox="0 0 16 16"><path d="M2 13a3 3 0 0 1 0-5q1-1 2-1a4.500 4.500 0 0 1 8 0q4 1 3 4 0 2-2 2z" fill="#eee"/></svg>
    <svg viewBox="0 0 16 16"><path d="M1 1h14v14H1z" fill="#8f7b80"/><path d="M1 1h7v5H1z" fill="#7c9465"/><path d="M8 6h7v5H8z" fill="#aa789e"/><path d="M2 10h7v5H2z" fill="#b29767"/></svg>
    <svg viewBox="0 0 16 16"><path d="M2 14A12 12 0 0 1 14 2M5 14a9 9 0 0 1 9-9M8 14a6 6 0 0 1 6-6M11 14a3 3 0 0 1 3-3" fill="none" stroke="#bbb" stroke-width="1.200"/></svg>
    <svg viewBox="0 0 16 16"><path d="M4.500 2L8 4.500 4.500 7 1 4.500zM11.500 2L15 4.500 11.500 7 8 4.500zM4.500 7L8 9.500 4.500 12 1 9.500zM11.500 7L15 9.500 11.500 12 8 9.500zM8 10.500l3 2-3 2-3-2z" fill="#eee"/></svg>
    <svg viewBox="0 0 16 16"><path d="M6 5h9v7H5M2 2v3M5 2v3M1 5h5v2L4 9v3H2" fill="none" stroke="#bbb" stroke-width="1.200"/><path d="M8 7l4 4M12 7l-4 4" stroke="#ddd"/></svg>
    <span class="lang">ENG<br>US</span><time>05:39 PM<br>2018-09-25</time>
    <button aria-label="Notifications" class="note"><svg viewBox="0 0 16 16"><path d="M1 1h14v11H8l-3 3v-3H1z" fill="#f2f2f2"/><path d="M3 4h10M3 6.500h10M3 9h6" stroke="#333"/></svg><b>3</b></button>
  </div>
</div>
<svg class="cursor" viewBox="0 0 27 42" aria-hidden="true"><path d="M.500 0v37l9-8 6 12 4-1-5-13 12-1z" fill="#000"/></svg>
</body>
</html>
```

FILE: styles.css
```css
* { box-sizing: border-box; }
body {
  margin: 0; height: 100vh; display: flex; flex-direction: column; overflow: hidden;
  background: #f0f0f0; color: #1c1c1c; font: 9px/16px "DejaVu Sans Condensed", "DejaVu Sans", sans-serif;
}
ul { list-style: none; margin: 0; padding: 0; }
button, input, select, kbd { font: inherit; color: inherit; }
button { border: 0; background: none; padding: 0; }
svg { display: block; flex: none; width: 14px; height: 14px; }
.sprite { display: none; }

.titlebar { height: 19px; background: #fff; display: flex; align-items: center; padding: 0 3px 0 1px; gap: 3px; }
.titlebar h1 { margin: 0; flex: 1; font: 10px/18px "Open Sans", sans-serif; }
.winbtns { display: flex; }
.winbtns button { width: 39px; display: grid; place-items: center; }
.winbtns svg { width: 10px; height: 10px; }

.menubar { position: relative; z-index: 5; height: 15px; background: #fff; display: flex; }
.menubar > button { padding: 0 5px 0 4px; line-height: 15px; }
.menubar > .open { padding: 0 4px 0 5px; background: #cce8ff; box-shadow: inset 0 0 0 1px #99d1ff; }
.menu { position: absolute; background: #f0f0f0; border: 1px solid #c8ccd0; padding: 1px; box-shadow: 1px 1px 2px #666; }
.project { left: 0; top: 14px; width: 200px; }
.menu li { position: relative; height: 31px; display: grid; grid-template-columns: 37px 101px 1fr; align-items: center; margin-right: 3px; }
.menu li > svg { grid-column: 1; grid-row: 1; margin-left: 8px; }
.menu li > span { grid-column: 2; grid-row: 1; white-space: nowrap; }
.menu li > kbd { grid-column: 3; grid-row: 1; white-space: nowrap; }
.menu .sep { height: 5px; margin: 0 0 0 34px; }
.menu .sep::before { content: ""; grid-column: 1 / -1; height: 1px; background: #d4d4d4; }
.menu .hot { background: #90c8f6; }
.more::after { content: ""; grid-column: 3; grid-row: 1; justify-self: end; margin-right: 8px; border: 5px solid transparent; border-left: 5px solid #000; border-right: 0; }
.menu .sub { left: 194px; top: 1px; width: 183px; border-color: #dde4ea; padding: 0; }
.sub li { grid-template-columns: 37px 1fr; margin-right: 2px; }
.sub li > svg { margin-left: 9px; }

.toolbar { display: flex; border-bottom: 1px solid #d0d0d0; padding-left: 204px; background: #f2f2f2; }
.toolbar:first-child { height: 23px; border-top: 1px solid #ddd; }
.toolbar:last-child { height: 22px; }
.toolbars { padding-bottom: 23px; }
.tools { display: flex; align-items: center; border-right: 1px solid #c4c4c4; }
.tools + .tools { padding-left: 8px; background: radial-gradient(circle, #b0b0b0 1px, transparent 1px) 2px 0 / 3px 3px repeat-y; }
.tools button { flex: 0 1 21px; min-width: 0; height: 20px; display: flex; align-items: center; padding-left: 2px; }
.nav { width: 227px; }
.attrs { width: 306px; }
.edit { width: 165px; }
.labels { width: 174px; }
.solo { width: 31px; }
.tools.attrs, .solo:last-child { border: 0; }
.tools svg { width: 16px; height: 16px; }
.tools .dd { flex-basis: 31px; }
.dd::after { content: ""; border: 5px solid transparent; border-top: 6px solid #111; border-bottom: 0; }
.dd.dim::after { border-top-color: #777; }
.tools .on { background: #cce4f8; box-shadow: inset 0 0 0 1px #90c0e8; }

.work { flex: 1; min-height: 0; display: grid; grid-template-columns: 322px 1fr 236px; gap: 3px; }
.left { display: grid; grid-template-rows: 279fr 276fr; gap: 4px; padding-top: 1px; min-height: 0; }
.dock { display: flex; flex-direction: column; min-height: 0; }
.dockhead { height: 15px; flex: none; display: flex; justify-content: flex-end; align-items: center; gap: 4px; padding-right: 2px; background: #d9d9d9; border: 1px solid #bdbdbd; }
.dockhead h2 { flex: 1; margin: 0; padding-left: 2px; font: inherit; }
.dockhead svg { width: 7px; height: 7px; }
.dockbody { flex: 1; min-height: 0; margin-top: 19px; display: flex; background: #fff; border: 1px solid #a2a2a2; overflow: hidden; }
.files, .legend { flex: 1; }
.files { padding-top: 63px; }
.files li { height: 16px; width: 256px; text-align: right; }
.files li:nth-child(1) { padding-right: 46px; }
.files li:nth-child(2) { padding-right: 31px; }
.files li:nth-child(3) { padding-right: 40px; }
.files .picked { background: #d9d9d9; }
.scroll { width: 28px; background: #f0f0f0; display: flex; flex-direction: column; align-items: center; justify-content: space-between; padding: 6px 0 7px; }
.scroll svg { margin-right: 2px; }
.scroll .up { transform: rotate(180deg); }
.scroll i { width: 28px; height: 22px; background: #cdcdcd; margin-bottom: 68px; }
.layers .scroll i { height: 60px; margin: 30px 0 0; }
.legend { display: flex; flex-direction: column; justify-content: flex-end; margin-bottom: -18px; }
.legend li { display: flex; align-items: center; gap: 4px; padding-left: 1px; height: 24px; }
.legend li > input:first-child { margin-left: 18px; }
.legend label { font-weight: bold; color: #b5b5b5; }
input[type="checkbox"] { appearance: none; flex: none; width: 21px; height: 21px; margin: 0; border: 1px solid #222; background: #fff; }

.canvas { background: #fff; border: 1px solid #a2a2a2; min-width: 0; min-height: 0; }
.canvas svg { width: 100%; height: 100%; }

.right { padding-top: 1px; display: flex; flex-direction: column; min-height: 0; }
.minibar { height: 20px; flex: none; display: flex; align-items: center; gap: 4px; padding-left: 2px; }
.minibar svg { width: 12px; height: 12px; }
.find { height: 14px; flex: none; display: flex; align-items: center; gap: 4px; padding-left: 4px; background: #fff; border: 1px solid #888; }
.find svg, .locate svg { width: 10px; height: 10px; }
.find input, .locate input { flex: 1; min-width: 0; border: 0; padding: 0; background: none; height: 12px; line-height: 12px; }
::placeholder { color: #777; opacity: 1; }
.tree { flex: 1; min-height: 0; background: #fff; border: 1px solid #a2a2a2; border-top: 0; white-space: nowrap; }
.tree li { height: 16px; display: flex; align-items: center; padding-left: 1px; gap: 3px; }
.tree li svg + svg { width: 13px; height: 13px; }
.tree .first { height: 12px; }
.tree .child { margin-left: 34px; }

.tree .picked { background: #d9d9d9; }

.status { height: 25px; flex: none; display: flex; align-items: center; padding: 0 4px 0 3px; gap: 3px; white-space: nowrap; }
.locate { width: 150px; height: 15px; display: flex; align-items: center; gap: 4px; padding-left: 4px; background: #fff; border: 1px solid #999; }
.message { flex: 1; padding-left: 2px; }
.status > input[type="text"], .status select, .spin { height: 15px; border: 1px solid #a0a0a0; background: #fff; padding: 0 2px; }
.status > #coord { width: 72px; padding: 0 1px; }
.status select { width: 74px; appearance: none; line-height: 13px; background: #fff url("data:image/svg+xml,%3Csvg xmlns='http://www.w3.org/2000/svg' viewBox='0 0 12 8'%3E%3Cpath d='M1 1l5 5 5-5' fill='none' stroke='%23555'/%3E%3C/svg%3E") right 1px center / 12px 8px no-repeat; }
.spin { width: 58px; display: flex; }
.spin.wide { width: 61px; }
.spin input { flex: 1; min-width: 0; border: 0; padding: 0; background: none; }
.steps { display: flex; flex-direction: column; justify-content: center; gap: 2px; }
.steps button { border: 4px solid transparent; border-bottom: 4px solid #111; border-top: 0; }
.steps button + button { border-bottom: 0; border-top: 4px solid #111; }
#render { border-color: #000; background: #fff url("data:image/svg+xml,%3Csvg xmlns='http://www.w3.org/2000/svg' viewBox='0 0 20 20'%3E%3Cpath d='M3 10l5 5L17 5' fill='none' stroke='%23111' stroke-width='1.500'/%3E%3C/svg%3E"); }
.crs { display: flex; align-items: center; gap: 2px; margin-left: 5px; }
.msgs { margin-left: 6px; }

.taskbar { height: 33px; flex: none; background: #161415; display: flex; color: #f0f0f0; }
.taskbar > button { flex: 0 1 35px; display: grid; place-items: center; border-bottom: 2px solid transparent; margin: 0 3px; }
.taskbar > button:nth-child(even) { margin-right: 4px; }
.taskbar > button:first-child { margin-left: 2px; flex-basis: 37px; }
.taskbar > button svg { width: 19px; height: 19px; }
.taskbar > .run { border-bottom-color: #9aa7b2; }
.taskbar > .active { background: #3f3f3f; margin: 0; flex-basis: 41px; }
.tray { margin-left: auto; display: flex; align-items: center; gap: 5px; font: 10px/15px "Open Sans", sans-serif; text-align: center; padding-right: 2px; }
.tray > svg { width: 15px; height: 15px; }
.lang { width: 28px; }
.tray time { width: 54px; }
.note { position: relative; width: 40px; display: grid; place-items: center; }
.note b { position: absolute; right: 8px; top: 6px; width: 12px; height: 12px; border-radius: 6px; background: #444; color: #fff; font: 9px/12px "Open Sans", sans-serif; }
.cursor { position: absolute; z-index: 9; left: 315px; top: 451px; width: 27px; height: 42px; }
```
